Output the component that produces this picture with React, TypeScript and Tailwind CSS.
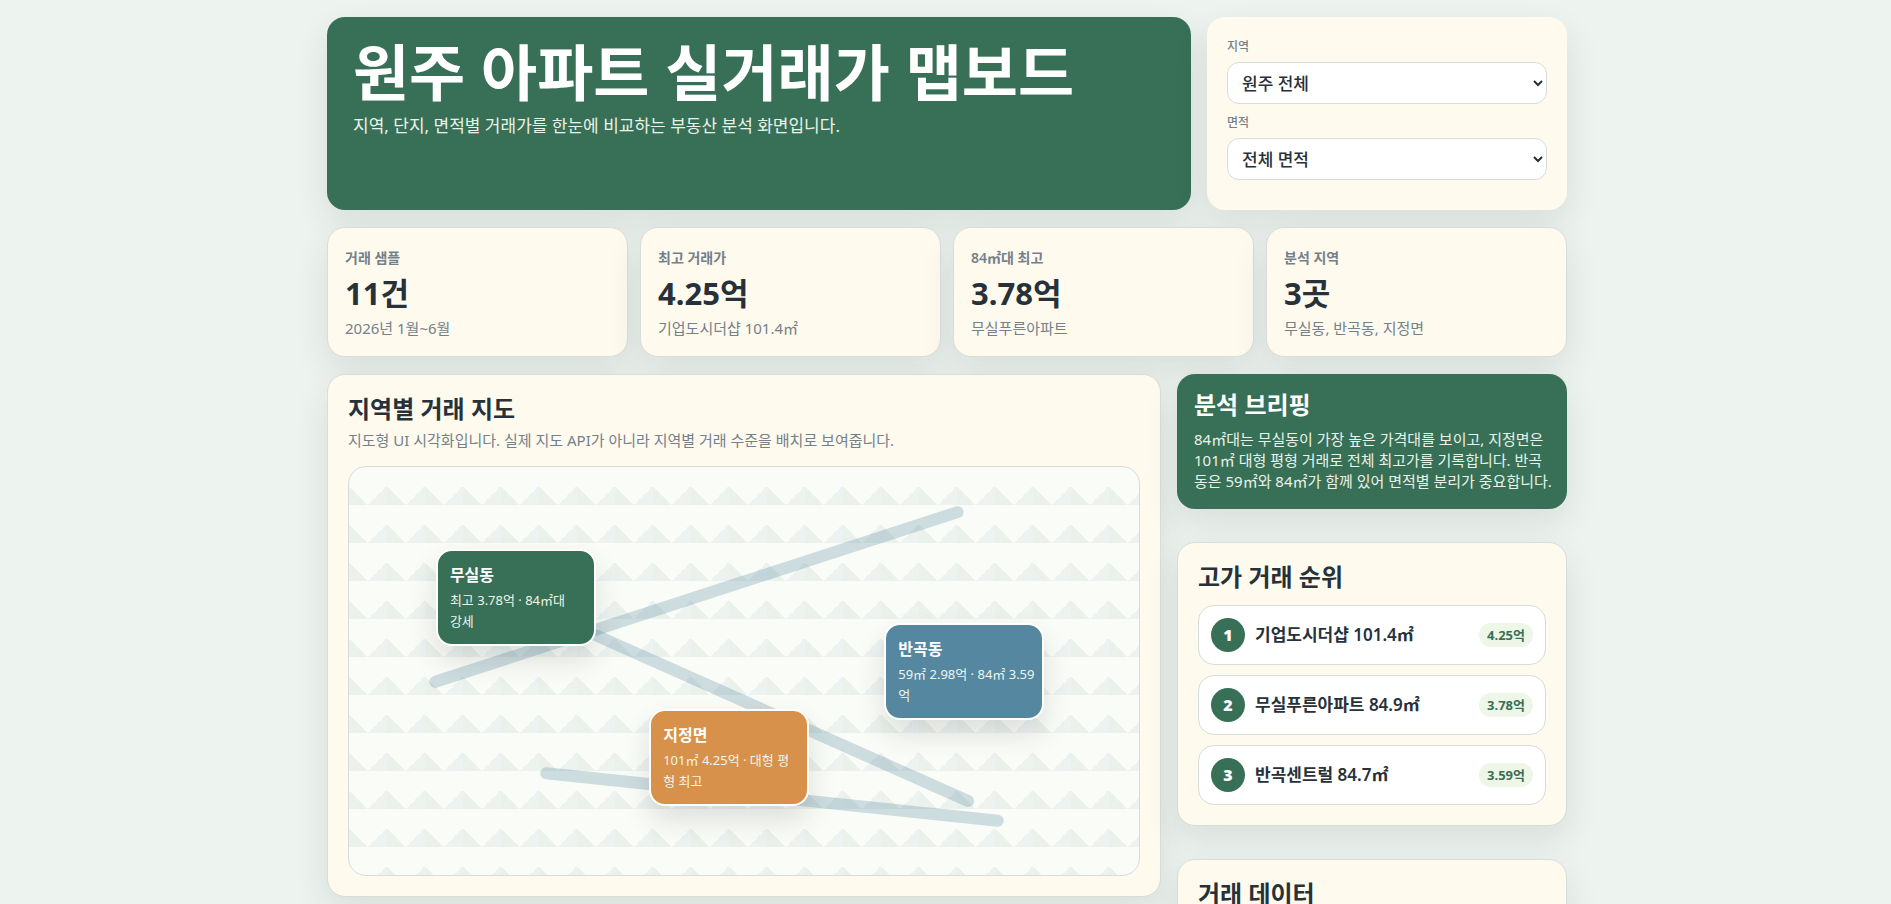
import React, { useState } from "react";

type Metric = { label: string; value: string; detail: string };
type Deal = { name: string; price: string };

const metrics: Metric[] = [
    { label: "거래 샘플", value: "11건", detail: "2026년 1월~6월" },
    { label: "최고 거래가", value: "4.25억", detail: "기업도시더샵 101.4㎡" },
    { label: "84㎡대 최고", value: "3.78억", detail: "무실푸른아파트" },
    { label: "분석 지역", value: "3곳", detail: "무실동, 반곡동, 지정면" },
];

const roads = [
    "left-[8.5%] top-[124px] w-[71%] -rotate-18",
    "left-[24.5%] top-[239px] w-[57%] rotate-24",
    "left-[24%] top-[324px] w-[59%] rotate-6",
];

const pins = [
    { name: "무실동", detail: ["최고 3.78억 · 84㎡대", "강세"], place: "left-[11%] top-[20%] bg-[#386f57]" },
    { name: "반곡동", detail: ["59㎡ 2.98억 · 84㎡ 3.59", "억"], place: "right-[12%] top-[156px] bg-[#5587a1]" },
    { name: "지정면", detail: ["101㎡ 4.25억 · 대형 평", "형 최고"], place: "left-[38%] bottom-[17%] bg-[#d7914a]" },
];

const deals: Deal[] = [
    { name: "기업도시더샵 101.4㎡", price: "4.25억" },
    { name: "무실푸른아파트 84.9㎡", price: "3.78억" },
    { name: "반곡센트럴 84.7㎡", price: "3.59억" },
];

const Card = ({ className, children }: { className: string; children: React.ReactNode }) => (
    <section className={`rounded-[18px] border border-[#d6ded8] bg-[#fffaee] shadow-[0_14px_34px_rgba(39,49,58,0.1)] ${className}`}>
        {children}
    </section>
);

const Filter = ({ id, label, options }: { id: string; label: string; options: string[] }) => {
    const [value, setValue] = useState(options[0]);

    return (
        <div className="flex flex-col gap-[5px]">
            <label htmlFor={id} className="text-xs leading-5 font-medium text-[#74808a]">{label}</label>
            <select
                id={id}
                value={value}
                onChange={(e) => setValue(e.target.value)}
                className="h-[42px] w-full rounded-xl border border-[#d6ded8] bg-white pl-[10px] text-[17px] font-medium"
            >
                {options.map((option) => <option key={option}>{option}</option>)}
            </select>
        </div>
    );
}

const App = () => {
    return (
        <div className="min-h-screen overflow-hidden bg-[#edf3ee] pt-[17px] pb-8 pl-[3px] font-['Noto_Sans','Noto_Sans_CJK_KR',sans-serif] text-[#27313a]">
            <main className="mx-auto flex max-w-[1240px] flex-col gap-[17px]">
                <header className="grid grid-cols-[1fr_360px] gap-4">
                    <div className="rounded-[18px] bg-[#386f57] px-[26px] py-6 text-white shadow-[0_14px_34px_rgba(39,49,58,0.1)]">
                        <h1 className="text-[61px] leading-[64px] font-bold">원주 아파트 실거래가 맵보드</h1>
                        <p className="mt-[9px] text-[17px] leading-6 text-[#e8f4e8]">지역, 단지, 면적별 거래가를 한눈에 비교하는 부동산 분석 화면입니다.</p>
                    </div>
                    <div className="flex min-h-[193px] flex-col gap-[9px] rounded-[18px] bg-[#fffaee] p-5 shadow-[0_14px_34px_rgba(39,49,58,0.1)]">
                        <Filter id="region" label="지역" options={["원주 전체", "무실동", "반곡동", "지정면"]} />
                        <Filter id="area" label="면적" options={["전체 면적", "59㎡", "84㎡", "101㎡"]} />
                    </div>
                </header>

                <div className="grid grid-cols-4 gap-3">
                    {metrics.map((metric) => (
                        <Card key={metric.label} className="px-[17px] pt-5 pb-[18px]">
                            <p className="text-sm leading-5 font-semibold text-[#74808a]">{metric.label}</p>
                            <p className="my-[5px] text-[31px] leading-10 font-bold">{metric.value}</p>
                            <p className="text-[15px] leading-5 text-[#74808a]">{metric.detail}</p>
                        </Card>
                    ))}
                </div>

                <div className="grid grid-cols-[1fr_390px] items-start gap-4">
                    <Card className="p-5">
                        <h2 className="text-2xl leading-7 font-bold">지역별 거래 지도</h2>
                        <p className="mt-[6px] text-[15px] leading-[22px] text-[#74808a]">지도형 UI 시각화입니다. 실제 지도 API가 아니라 지역별 거래 수준을 배치로 보여줍니다.</p>
                        <div className="relative mt-[15px] h-[410px] overflow-hidden rounded-[18px] border border-[#d6ded8] bg-[#fafcf7] bg-[linear-gradient(45deg,rgba(56,111,87,0.08)_25%,transparent_25%),linear-gradient(-45deg,rgba(85,135,161,0.08)_25%,transparent_25%)] bg-[length:38px_38px]">
                            {roads.map((road) => (
                                <div key={road} className={`absolute h-3 rounded-full bg-[#5587a1]/28 ${road}`} />
                            ))}
                            {pins.map((pin) => (
                                <div key={pin.name} className={`absolute w-40 rounded-2xl border-2 border-white p-3 text-white shadow-[0_14px_28px_rgba(39,49,58,0.14)] ${pin.place}`}>
                                    <h3 className="text-base leading-6 font-semibold">{pin.name}</h3>
                                    <p className="mt-[3px] text-[13px] leading-[21px] whitespace-nowrap text-[#eef6ea]">
                                        {pin.detail.map((line) => <span key={line} className="block">{line}</span>)}
                                    </p>
                                </div>
                            ))}
                        </div>
                    </Card>

                    <aside className="flex flex-col gap-[33px]">
                        <section className="rounded-[18px] bg-[#386f57] py-[17px] pr-3 pl-[17px] text-white shadow-[0_14px_34px_rgba(39,49,58,0.1)]">
                            <h2 className="text-2xl leading-7 font-bold">분석 브리핑</h2>
                            <p className="mt-[10px] text-[15px] leading-[21px] text-[#e8f4e8]">84㎡대는 무실동이 가장 높은 가격대를 보이고, 지정면은 101㎡ 대형 평형 거래로 전체 최고가를 기록합니다. 반곡동은 59㎡와 84㎡가 함께 있어 면적별 분리가 중요합니다.</p>
                        </section>

                        <Card className="p-5">
                            <h2 className="text-2xl leading-7 font-bold">고가 거래 순위</h2>
                            <ol className="mt-[14px] flex flex-col gap-[10px]">
                                {deals.map((deal, i) => (
                                    <li key={deal.name} className="flex items-center gap-[10px] rounded-2xl border border-[#d6ded8] bg-white p-3">
                                        <span className="flex size-[34px] items-center justify-center rounded-full bg-[#386f57] text-base font-black text-white">{i + 1}</span>
                                        <b className="flex-1 text-[17px] leading-6 font-semibold">{deal.name}</b>
                                        <span className="rounded-full bg-[#eef6e8] px-2 text-[13px] leading-6 font-bold text-[#386f57]">{deal.price}</span>
                                    </li>
                                ))}
                            </ol>
                        </Card>

                        <Card className="p-5">
                            <h2 className="text-2xl leading-7 font-bold">거래 데이터</h2>
                        </Card>
                    </aside>
                </div>
            </main>
        </div>
    )
}

export default App;
